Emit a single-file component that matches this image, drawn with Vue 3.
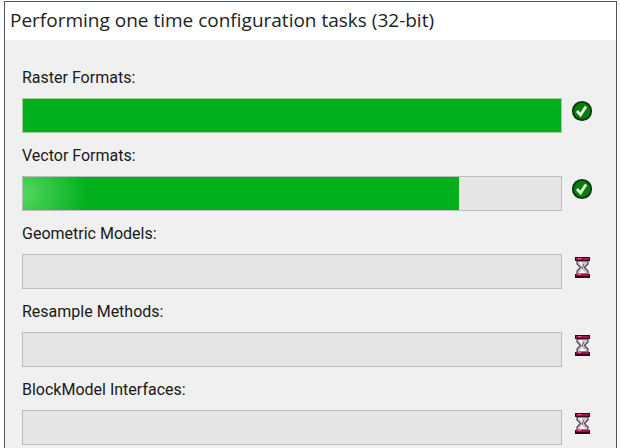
<script setup>
const tasks = [
  { id: 'raster', label: 'Raster Formats:', value: 100, done: true },
  { id: 'vector', label: 'Vector Formats:', value: 81, done: true, glow: true },
  { id: 'geometric', label: 'Geometric Models:', value: 0, done: false },
  { id: 'resample', label: 'Resample Methods:', value: 0, done: false },
  { id: 'block', label: 'BlockModel Interfaces:', value: 0, done: false },
]
</script>

<template>
  <div class="desktop">
    <main class="dialog">
      <header class="titlebar">
        <h1 class="title">Performing one time configuration tasks (32-bit)</h1>
      </header>
      <section class="tasks">
        <div v-for="task in tasks" :key="task.id" class="task">
          <label :for="task.id" class="label">{{ task.label }}</label>
          <div class="row">
            <progress
              :id="task.id"
              class="track"
              :class="{ filled: task.value === 100, glow: task.glow }"
              :value="task.value"
              max="100"
            ></progress>
            <svg v-if="task.done" class="icon" viewBox="0 0 22 22" aria-hidden="true">
              <circle cx="11" cy="11" r="9.2" fill="#087d0d" stroke="#06370b" stroke-width="1.8" />
              <path d="M6 11 L9.5 15 L15 6.5" fill="none" stroke="#e5ffdc" stroke-width="2.8" />
            </svg>
            <svg v-else class="icon" viewBox="0 0 22 22" aria-hidden="true">
              <path d="M6 5 V8 L9.5 11.5 L6 15 V18 H17 V15 L13.5 11.5 L17 8 V5 Z" fill="#c9c5c8" stroke="#4b4449" stroke-width="1.2" />
              <path d="M7.5 6 H11 V10 Z M11.5 12.5 L14.5 17 H8.5 Z" fill="#fff" />
              <path d="M12.5 8 V10 M11.5 10 V13 M13 14 V15" stroke="#77717a" stroke-width="1" />
              <rect x="4" y="1" width="15" height="4" fill="#3a0418" />
              <rect x="5" y="2" width="13" height="2" fill="#b80b50" />
              <rect x="4" y="18" width="15" height="4" fill="#3a0418" />
              <rect x="5" y="18" width="13" height="2" fill="#a50b48" />
              <path d="M7 2.5 H10 M7 18.5 H10" stroke="#e56c9b" stroke-width="1" />
            </svg>
          </div>
        </div>
      </section>
    </main>
  </div>
</template>

<style>
body {
  overflow: hidden;
}
</style>

<style scoped>
.desktop {
  box-sizing: border-box;
  display: flex;
  min-height: 100vh;
  padding: 1px 3px 0 4px;
  background: #fdfdfd;
}
.dialog {
  flex: 1;
  border: 1px solid #4a5a5c;
  border-bottom: 0;
  background: #f0f0f0;
}
.titlebar {
  padding: 5px 5px 7px;
  background: #fff;
}
.title {
  margin: 0;
  color: #222;
  font: 400 19px/26px "Open Sans", "Noto Sans", sans-serif;
  white-space: nowrap;
}
.tasks {
  display: flex;
  flex-direction: column;
  gap: 11px;
  padding: 26px 23px 0 17px;
}
.label {
  display: block;
  height: 32px;
  color: #191919;
  font: 400 16px/24px Roboto, sans-serif;
}
.row {
  display: flex;
  gap: 9px;
}
.track {
  appearance: none;
  box-sizing: border-box;
  flex: 1;
  min-width: 0;
  height: 35px;
  border: 1px solid #bcbcbc;
  background: #e6e6e6;
}
.track.filled {
  border-color: #a3c9a6;
}
.track::-webkit-progress-bar {
  background: #e6e6e6;
}
.track::-webkit-progress-value {
  background: #02b01e;
}
.track.glow::-webkit-progress-value {
  background: radial-gradient(ellipse 64px 60px at 0 50%, #55d763 0%, #3ccb4c 30%, #02b01e 100%);
}
.icon {
  width: 22px;
  height: 22px;
  margin-top: 2px;
}
</style>
